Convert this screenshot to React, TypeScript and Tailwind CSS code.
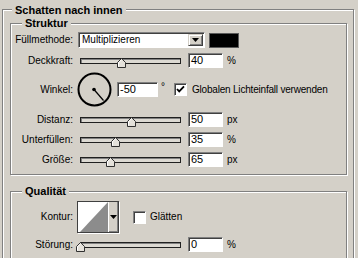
import React from "react";

// Photoshop "Ebenenstil > Schatten nach innen" panel, classic Windows look

type GroupProps = {
  title: string;
  titleClass: string;
  className?: string;
  children?: React.ReactNode;
};

function Group({ title, titleClass, className = "", children }: GroupProps) {
  return (
    <div
      className={`relative border border-[#808080] shadow-[inset_1px_1px_0_#fff,1px_1px_0_#fff] ${className}`}
    >
      <span
        className={`absolute bg-[#d4d0c8] px-[3px] text-[11px] font-bold leading-[13px] ${titleClass}`}
      >
        {title}
      </span>
      {children}
    </div>
  );
}

function Label({ children }: { children: React.ReactNode }) {
  return <div className="w-[62px] shrink-0 text-right text-[10px] leading-[12px]">{children}</div>;
}

function Field({ value, className }: { value: string; className: string }) {
  return (
    <div
      className={`flex h-[15px] shrink-0 items-center border border-[#808080] border-b-white border-r-white bg-white pl-[2px] text-[11px] leading-none shadow-[inset_1px_1px_0_#404040] ${className}`}
    >
      {value}
    </div>
  );
}

function Unit({ children }: { children: React.ReactNode }) {
  return <span className="ml-[4px] self-start pt-[2px] text-[10px] leading-[12px]">{children}</span>;
}

function Slider({ pos }: { pos: number }) {
  return (
    <div className="relative ml-[4px] h-full w-[107px] shrink-0">
      <div className="ml-[3px] mt-[5px] h-[6px] w-[101px] border border-[#202020] bg-[#dcd9d2] shadow-[inset_1px_1px_0_#808080]" />
      <svg
        className="absolute top-[5px]"
        style={{ left: 3 + pos - 4 }}
        width="9"
        height="10"
        viewBox="0 0 9 10"
      >
        <path d="M4.5 0.5 L8.5 4.5 V9.5 H0.5 V4.5 Z" fill="#e4e1da" stroke="#303030" />
        <path d="M4.5 1.8 L1.5 4.8 V8.5" fill="none" stroke="#fff" />
      </svg>
    </div>
  );
}

function Checkbox() {
  return (
    <div className="flex h-[13px] w-[13px] shrink-0 items-center justify-center border border-[#808080] border-b-white border-r-white bg-white shadow-[inset_1px_1px_0_#404040]">
      <svg width="9" height="9" viewBox="0 0 9 9">
        <path d="M1 4 L3.2 6.4 L8 1.4" fill="none" stroke="#000" strokeWidth="1.8" />
      </svg>
    </div>
  );
}

function EmptyCheckbox() {
  return (
    <div className="h-[13px] w-[13px] shrink-0 border border-[#808080] border-b-white border-r-white bg-white shadow-[inset_1px_1px_0_#404040]" />
  );
}

function DownArrow() {
  return (
    <svg width="7" height="4" viewBox="0 0 7 4">
      <path d="M0 0 H7 L3.5 4 Z" fill="#000" />
    </svg>
  );
}

export default function App() {
  return (
    <div className="h-[258px] w-[358px] overflow-hidden bg-[#d4d0c8] pl-[2px] pt-[9px] font-['Liberation_Sans',Arial,sans-serif] text-black">
      <Group
        title="Schatten nach innen"
        titleClass="left-[9px] top-[-6px]"
        className="h-[270px] w-[352px] pl-[7px] pt-[13px]"
      >
        {/* Struktur */}
        <Group title="Struktur" titleClass="left-[11px] top-[-7px]" className="h-[152px] w-[337px] pt-[8px]">
          <div className="flex flex-col">
            <div className="flex h-[16px] items-center">
              <Label>Füllmethode:</Label>
              <div className="ml-[5px] flex h-[16px] w-[127px] items-center justify-between border border-[#808080] border-b-white border-r-white bg-white pl-[3px] pr-[1px] shadow-[inset_1px_1px_0_#404040]">
                <span className="text-[10px] leading-none">Multiplizieren</span>
                <div className="flex h-[12px] w-[15px] items-center justify-center border border-[#d4d0c8] border-b-[#404040] border-r-[#404040] bg-[#d4d0c8] shadow-[inset_1px_1px_0_#fff,inset_-1px_-1px_0_#808080]">
                  <DownArrow />
                </div>
              </div>
              <div className="ml-[4px] h-[15px] w-[30px] border border-[#5a5a5a] bg-black" />
            </div>

            <div className="mt-[5px] flex h-[15px] items-center">
              <Label>Deckkraft:</Label>
              <Slider pos={41} />
              <Field value="40" className="ml-[4px] w-[35px]" />
              <Unit>%</Unit>
            </div>

            <div className="mt-[4px] flex h-[35px] items-center">
              <Label>Winkel:</Label>
              <svg className="ml-[4px] shrink-0" width="35" height="35" viewBox="0 0 35 35">
                <circle cx="17.5" cy="17.5" r="16" fill="none" stroke="#000" strokeWidth="2" />
                <line x1="17" y1="17.5" x2="26.5" y2="28.5" stroke="#000" strokeWidth="1.2" />
                <circle cx="17" cy="17.5" r="1.8" fill="#000" />
              </svg>
              <Field value="-50" className="ml-[5px] w-[41px]" />
              <span className="ml-[3px] self-start pt-[9px] text-[10px] leading-[12px]">°</span>
              <div className="ml-[9px] flex items-center">
                <Checkbox />
                <span className="ml-[5px] text-[10px] leading-[12px] tracking-[-0.2px]">
                  Globalen Lichteinfall verwenden
                </span>
              </div>
            </div>

            <div className="mt-[5px] flex h-[15px] items-center">
              <Label>Distanz:</Label>
              <Slider pos={51} />
              <Field value="50" className="ml-[4px] w-[35px]" />
              <Unit>px</Unit>
            </div>

            <div className="mt-[5px] flex h-[15px] items-center">
              <Label>Unterfüllen:</Label>
              <Slider pos={35} />
              <Field value="35" className="ml-[4px] w-[35px]" />
              <Unit>%</Unit>
            </div>

            <div className="mt-[5px] flex h-[15px] items-center">
              <Label>Größe:</Label>
              <Slider pos={30} />
              <Field value="65" className="ml-[4px] w-[35px]" />
              <Unit>px</Unit>
            </div>
          </div>
        </Group>

        {/* Qualität */}
        <Group title="Qualität" titleClass="left-[11px] top-[-7px]" className="mt-[16px] h-[90px] w-[337px] pt-[9px]">
          <div className="flex flex-col">
            <div className="flex h-[32px] items-center">
              <Label>Kontur:</Label>
              <div className="ml-[4px] flex h-[32px] w-[42px] shrink-0 border border-[#404040] bg-[#d4d0c8] shadow-[1px_1px_0_#fff]">
                <svg width="30" height="30" viewBox="0 0 30 30" className="shrink-0">
                  <rect width="30" height="30" fill="#fff" />
                  <path d="M30 0 V30 H2 Z" fill="#8c8c8c" />
                </svg>
                <div className="flex flex-1 items-center justify-center border-l border-white shadow-[inset_-1px_-1px_0_#808080]">
                  <DownArrow />
                </div>
              </div>
              <div className="ml-[14px] flex items-center">
                <EmptyCheckbox />
                <span className="ml-[4px] text-[10px] leading-[12px]">Glätten</span>
              </div>
            </div>

            <div className="mt-[4px] flex h-[15px] items-center">
              <Label>Störung:</Label>
              <Slider pos={0} />
              <Field value="0" className="ml-[4px] w-[35px]" />
              <Unit>%</Unit>
            </div>
          </div>
        </Group>
      </Group>
    </div>
  );
}
